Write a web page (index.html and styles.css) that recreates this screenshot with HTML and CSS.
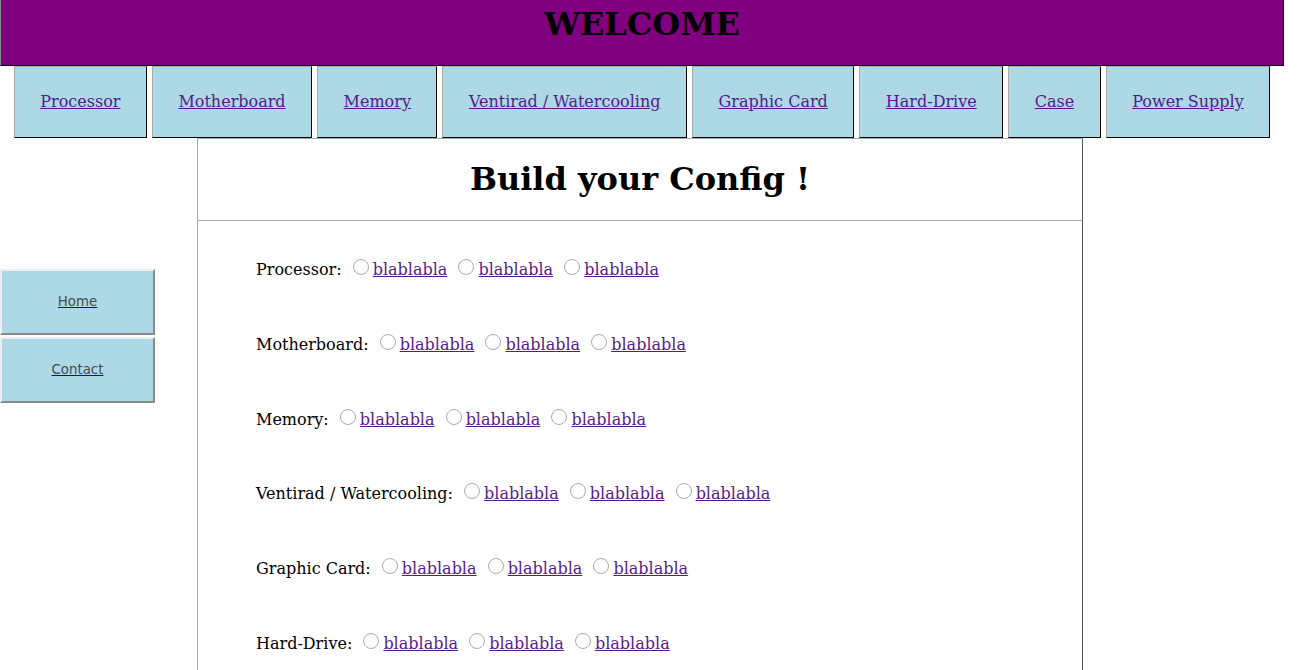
FILE: index.html
```html
<!DOCTYPE html>
<html>
<head>
<meta charset="utf-8">
<title>Build your Config</title>
<link rel="stylesheet" href="styles.css">
</head>
<body>
<header class="top">
  <h1 class="welcome">WELCOME</h1>
</header>
<nav class="cats">
  <a class="cat" href="#">Processor</a>
  <a class="cat" href="#">Motherboard</a>
  <a class="cat" href="#">Memory</a>
  <a class="cat" href="#">Ventirad / Watercooling</a>
  <a class="cat" href="#">Graphic Card</a>
  <a class="cat" href="#">Hard-Drive</a>
  <a class="cat" href="#">Case</a>
  <a class="cat" href="#">Power Supply</a>
</nav>
<div class="layout">
  <aside class="side">
    <div class="side-item"><a href="#">Home</a></div>
    <div class="side-item"><a href="#">Contact</a></div>
  </aside>
  <main class="config">
    <div class="config-head"><h1 class="config-title">Build your Config !</h1></div>
    <div class="rows">
      <div class="row">Processor: <input type="radio" name="p"><a href="#">blablabla</a> <input type="radio" name="p"><a href="#">blablabla</a> <input type="radio" name="p"><a href="#">blablabla</a></div>
      <div class="row">Motherboard: <input type="radio" name="m"><a href="#">blablabla</a> <input type="radio" name="m"><a href="#">blablabla</a> <input type="radio" name="m"><a href="#">blablabla</a></div>
      <div class="row">Memory: <input type="radio" name="r"><a href="#">blablabla</a> <input type="radio" name="r"><a href="#">blablabla</a> <input type="radio" name="r"><a href="#">blablabla</a></div>
      <div class="row">Ventirad / Watercooling: <input type="radio" name="v"><a href="#">blablabla</a> <input type="radio" name="v"><a href="#">blablabla</a> <input type="radio" name="v"><a href="#">blablabla</a></div>
      <div class="row">Graphic Card: <input type="radio" name="g"><a href="#">blablabla</a> <input type="radio" name="g"><a href="#">blablabla</a> <input type="radio" name="g"><a href="#">blablabla</a></div>
      <div class="row">Hard-Drive: <input type="radio" name="h"><a href="#">blablabla</a> <input type="radio" name="h"><a href="#">blablabla</a> <input type="radio" name="h"><a href="#">blablabla</a></div>
      <div class="row">Case: <input type="radio" name="c"><a href="#">blablabla</a> <input type="radio" name="c"><a href="#">blablabla</a> <input type="radio" name="c"><a href="#">blablabla</a></div>
      <div class="row">Power Supply: <input type="radio" name="s"><a href="#">blablabla</a> <input type="radio" name="s"><a href="#">blablabla</a> <input type="radio" name="s"><a href="#">blablabla</a></div>
    </div>
  </main>
</div>
</body>
</html>
```
FILE: styles.css
```css
html, body {
  margin: 0;
  padding: 0;
  background: #fff;
  font-family: "DejaVu Serif", serif;
  font-size: 16px;
  color: #000;
}

a {
  color: #551a8b;
}

.top {
  width: 1282px;
  height: 65px;
  background: #800080;
  border-left: 1px solid #8a8a8a;
  border-right: 1px solid #000;
  border-bottom: 1px solid #000;
}

.welcome {
  margin: 0;
  padding-top: 5px;
  text-align: center;
  font-size: 32px;
  font-weight: bold;
}

.cats {
  width: 1284px;
  display: flex;
  justify-content: center;
  gap: 5px;
}

.cat {
  display: block;
  height: 70px;
  line-height: 70px;
  padding: 0 25.5px;
  background: #add8e6;
  border-top: 1px solid #a9a9a9;
  border-left: 1px solid #a9a9a9;
  border-right: 1px solid #000;
  border-bottom: 1px solid #000;
}

.layout {
  display: flex;
  align-items: flex-start;
}

.side {
  width: 155px;
  margin-top: 131px;
  display: flex;
  flex-direction: column;
  gap: 2px;
}

.side-item {
  height: 62px;
  line-height: 62px;
  text-align: center;
  background: #add8e6;
  border-top: 2px solid #eeeeee;
  border-left: 2px solid #eeeeee;
  border-right: 2px solid #8a8a8a;
  border-bottom: 2px solid #8a8a8a;
  font-family: "DejaVu Sans", sans-serif;
  font-size: 13.33px;
}

.side-item a {
  color: #4a4a4a;
  text-decoration-color: #0000ee;
}

.config {
  width: 884px;
  margin-left: 42px;
  border-top: 1px solid #aaaaaa;
  border-left: 1px solid #aaaaaa;
  border-right: 1px solid #555555;
  border-bottom: 1px solid #555555;
}

.config-head {
  border-bottom: 1px solid #aaaaaa;
}

.config-title {
  margin: 21px 0 22px;
  text-align: center;
  font-size: 32px;
}

.rows {
  padding: 35px 0 0 58px;
}

.row {
  height: 74.8px;
}

.row input[type="radio"] {
  appearance: none;
  -webkit-appearance: none;
  box-sizing: border-box;
  width: 16px;
  height: 16px;
  margin: 3px 4px 0 6px;
  border: 1px solid #ababab;
  border-radius: 50%;
  background: #fff;
}
```
